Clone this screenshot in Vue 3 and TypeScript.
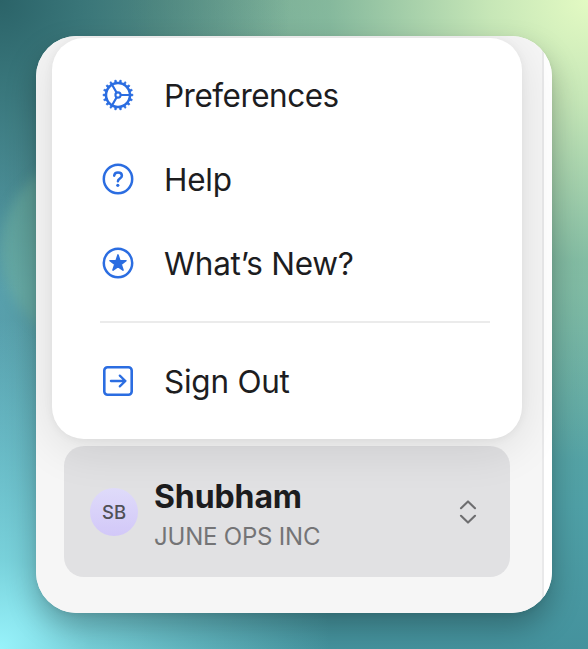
<script setup lang="ts">
interface MenuItem {
  label: string
  icon: 'gear' | 'help' | 'star' | 'exit'
}

const items: MenuItem[] = [
  { label: 'Preferences', icon: 'gear' },
  { label: 'Help', icon: 'help' },
  { label: 'What’s New?', icon: 'star' },
  { label: 'Sign Out', icon: 'exit' },
]

const teeth = Array.from({ length: 18 }, (_, i) => i * 20)
</script>

<template>
  <main class="desktop">
    <div class="glow"></div>
    <section class="window">
      <div class="sidebar">
        <nav class="menu">
          <template v-for="item in items" :key="item.icon">
            <hr v-if="item.icon === 'exit'" class="divider" />
            <a class="item">
              <svg class="icon" viewBox="0 0 32 32" fill="none" stroke="currentColor" stroke-width="2.5">
                <template v-if="item.icon === 'gear'">
                  <circle cx="16" cy="16" r="12" />
                  <path v-for="a in teeth" :key="a" d="M27.5 14.7 31 15.3V16.7L27.5 17.3Z" fill="currentColor" stroke-width=".6" :transform="`rotate(${a} 16 16)`" />
                  <circle cx="16" cy="16" r="2.6" stroke-width="2.1" />
                  <path d="M18.5 16H28M14.7 13.8 9.9 5.5M14.7 18.2 9.9 26.5" stroke-width="2.2" />
                </template>
                <template v-else-if="item.icon === 'help'">
                  <circle cx="16" cy="16" r="14.2" />
                  <path d="M12.2 12.7C12.4 10.6 13.8 9.6 16 9.6C18.4 9.6 19.9 10.9 19.9 12.7C19.9 15.5 15.9 15.5 15.9 18.3" stroke-linecap="round" stroke-linejoin="round" />
                  <circle cx="15.8" cy="22.3" r="1.6" fill="currentColor" stroke="none" />
                </template>
                <template v-else-if="item.icon === 'star'">
                  <circle cx="16" cy="16" r="14.2" />
                  <path d="M16 7.9 17.9 13.7H24L19.1 17.3 21 23.1 16 19.5 11 23.1 12.9 17.3 8 13.7H14.1Z" fill="currentColor" stroke-width="1.6" stroke-linejoin="round" />
                </template>
                <template v-else>
                  <rect x="2.3" y="2.3" width="27.4" height="27.4" rx="3.2" stroke-width="2.6" />
                  <path d="M8.9 16H23.4M17.8 10.6 23.4 16 17.8 21.4" stroke-width="2.3" stroke-linecap="round" stroke-linejoin="round" />
                </template>
              </svg>
              <span :class="['label', item.icon]">{{ item.label }}</span>
            </a>
          </template>
        </nav>
        <div class="account">
          <div class="avatar">SB</div>
          <div class="identity">
            <div class="name">Shubham</div>
            <div class="org">JUNE OPS INC</div>
          </div>
          <svg class="chevrons" viewBox="0 0 20 26" fill="none" stroke="currentColor" stroke-width="2.1" stroke-linecap="round" stroke-linejoin="round">
            <path d="M3 9.2 10 2.4 17 9.2M3 16.8 10 23.6 17 16.8" />
          </svg>
        </div>
      </div>
    </section>
  </main>
</template>

<style>
body {
  margin: 0;
}
</style>

<style scoped>
.desktop {
  position: relative;
  box-sizing: border-box;
  width: 588px;
  height: 649px;
  padding: 36px;
  overflow: hidden;
  font-family: Inter, "Liberation Sans", sans-serif;
  background:
    radial-gradient(circle at 0 0, #2b6368 0, rgba(50, 110, 114, 0.85) 80px, rgba(70, 135, 138, 0) 290px),
    radial-gradient(circle at 100% 0, #e3fac3 0, rgba(208, 238, 187, 0.9) 100px, rgba(150, 200, 165, 0.6) 260px, rgba(130, 180, 155, 0) 460px),
    radial-gradient(circle at 0 100%, #98f3fb 0, rgba(130, 222, 230, 0.8) 90px, rgba(110, 200, 208, 0) 330px),
    linear-gradient(to right, rgba(84, 156, 174, 0.8) 0, rgba(84, 156, 174, 0) 150px),
    linear-gradient(to bottom, #6ba08f 0, #67aca2 45%, #4fa0a6 78%, #44929d 100%);
}

.glow {
  position: absolute;
  left: 1px;
  top: 155px;
  width: 190px;
  height: 190px;
  border-radius: 50%;
  background: rgba(118, 184, 160, 0.42);
  filter: blur(6px);
}

.window {
  position: relative;
  box-sizing: border-box;
  width: 516px;
  height: 577px;
  border-radius: 41px;
  background: #fff;
  box-shadow: 0 14px 30px rgba(0, 0, 0, 0.28), 0 2px 5px rgba(0, 0, 0, 0.06);
}

.sidebar {
  box-sizing: border-box;
  height: 577px;
  padding: 2px 22px 0 16px;
  overflow: hidden;
  border-radius: 41px;
  background: linear-gradient(to right, #f6f6f6 0 506px, #e9e9ea 506px 508px, #fff 508px);
}

.menu {
  position: relative;
  z-index: 1;
  box-sizing: border-box;
  width: 470px;
  height: 401px;
  padding: 15px 32px 0 48px;
  border-radius: 32px;
  background: #fff;
  box-shadow: 0 8px 48px rgba(0, 0, 0, 0.11), 0 1px 10px rgba(0, 0, 0, 0.05);
}

.item {
  display: flex;
  align-items: center;
  height: 84px;
  padding-left: 2px;
  gap: 30px;
  color: #2b6de1;
}

.icon {
  width: 32px;
  height: 32px;
}

.label {
  padding-top: 2px;
  font-size: 31.5px;
  line-height: 38px;
  letter-spacing: -0.25px;
  color: #1d1d1f;
}

.label.gear {
  letter-spacing: -0.5px;
}

.divider {
  height: 2px;
  margin: 16px 0;
  border: 0;
  background: #ebebeb;
}

.account {
  display: flex;
  align-items: center;
  box-sizing: border-box;
  width: 446px;
  height: 131px;
  margin: 7px 0 0 12px;
  padding: 0 32px 0 26px;
  border-radius: 20px;
  background: #e1e1e3;
}

.avatar {
  display: flex;
  align-items: center;
  justify-content: center;
  width: 48px;
  height: 48px;
  border-radius: 50%;
  background: linear-gradient(#dfdbfa, #d2c8f8);
  color: #505056;
  font-size: 18.5px;
  font-weight: 500;
}

.identity {
  flex: 1;
  padding: 9px 0 0 16px;
}

.name {
  font-size: 32px;
  line-height: 40px;
  font-weight: 700;
  letter-spacing: -0.1px;
  color: #1c1c1e;
}

.org {
  font-size: 24px;
  line-height: 39px;
  letter-spacing: -0.2px;
  color: #747476;
}

.chevrons {
  width: 20px;
  height: 26px;
  color: #6e6e70;
}
</style>
